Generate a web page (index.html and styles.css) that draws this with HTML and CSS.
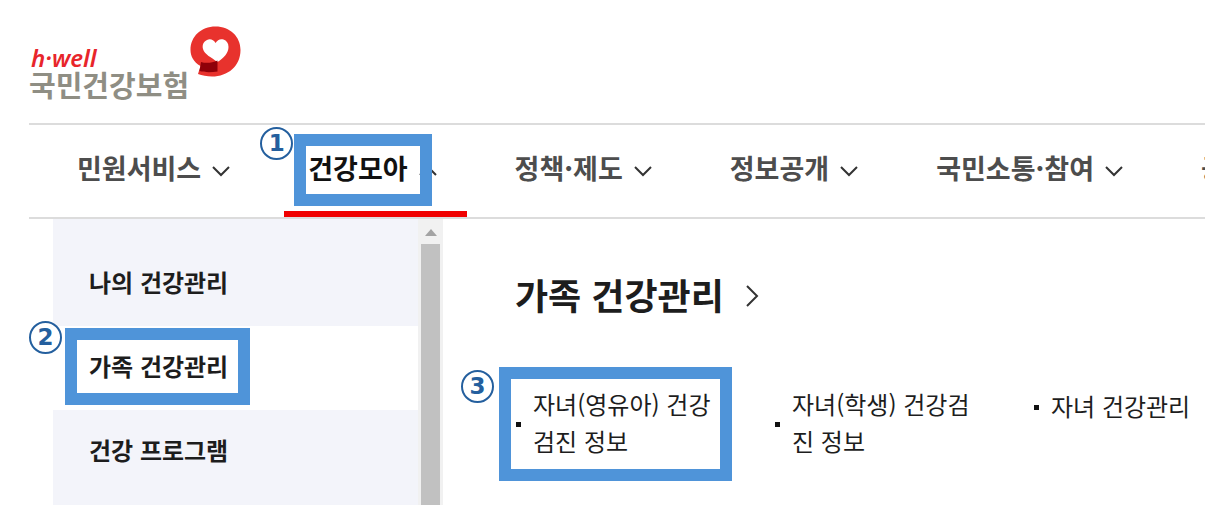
FILE: index.html
```html
<!DOCTYPE html>
<html lang="ko">
<head>
    <meta charset="UTF-8">
    <meta name="viewport" content="width=device-width, initial-scale=1.0">
    <title>국민건강보험</title>
    <link rel="stylesheet" href="styles.css">
</head>
<body>
    <header class="site-header">
        <a class="logo" href="#">
            <span class="logo-text">
                <span class="logo-en">h·well</span>
                <span class="logo-ko">국민건강보험</span>
            </span>
            <svg class="logo-mark" viewBox="0 0 51 51" aria-hidden="true">
                <path fill="#e8322d" d="M25.500 0.500C40 0.500 50.500 10.500 50.500 24C50.500 40 38 50.500 22 50.500C17 50.500 12 49.500 8 48L10.500 40C3.500 36 0.500 30 0.500 24C0.500 10.500 11 0.500 25.500 0.500Z"/>
                <path fill="#fff" d="M25.500 17C23.500 13.500 20 12.500 17 14C13.500 15.500 12 19 13 23C14.500 28.500 21.500 31.500 27.500 36C34 32 38.500 27 38.500 21C38.500 17 36.500 14.500 33.500 13.500C30.500 12.500 27.500 13.500 25.500 17Z"/>
                <path fill="#8f0009" d="M11 36C16 37.500 22 37 27.500 34.500V45.500C21 46.500 14.500 46.500 9.500 45Z"/>
            </svg>
        </a>
    </header>

    <nav class="main-nav">
        <a class="nav-item" href="#">민원서비스
            <svg class="arrow" viewBox="0 0 18 12"><path d="M1 2L9 10L17 2"/></svg>
        </a>
        <a class="nav-item active" href="#">건강모아
            <svg class="arrow" viewBox="0 0 18 12"><path d="M1 10L9 2L17 10"/></svg>
            <span class="frame frame-nav"></span>
            <span class="step step-nav">1</span>
        </a>
        <a class="nav-item" href="#">정책·제도
            <svg class="arrow" viewBox="0 0 18 12"><path d="M1 2L9 10L17 2"/></svg>
        </a>
        <a class="nav-item" href="#">정보공개
            <svg class="arrow" viewBox="0 0 18 12"><path d="M1 2L9 10L17 2"/></svg>
        </a>
        <a class="nav-item" href="#">국민소통·참여
            <svg class="arrow" viewBox="0 0 18 12"><path d="M1 2L9 10L17 2"/></svg>
        </a>
        <a class="nav-item" href="#">공단소개</a>
    </nav>

    <main class="mega-menu">
        <aside class="side-menu">
            <a class="side-item" href="#">나의 건강관리</a>
            <a class="side-item selected" href="#">가족 건강관리
                <span class="frame frame-side"></span>
                <span class="step step-side">2</span>
            </a>
            <a class="side-item" href="#">건강 프로그램</a>
        </aside>
        <div class="scrollbar" aria-hidden="true">
            <div class="scroll-up"></div>
            <div class="scroll-thumb"></div>
        </div>

        <section class="content">
            <h2 class="content-title">
                <a href="#">가족 건강관리
                    <svg class="title-arrow" viewBox="0 0 14 22"><path d="M2 1L12 11L2 21"/></svg>
                </a>
            </h2>
            <ul class="link-list">
                <li>
                    <a href="#">자녀(영유아) 건강검진 정보</a>
                    <span class="frame frame-link"></span>
                    <span class="step step-link">3</span>
                </li>
                <li><a href="#">자녀(학생) 건강검진 정보</a></li>
                <li><a href="#">자녀 건강관리</a></li>
            </ul>
        </section>
    </main>
</body>
</html>
```
FILE: styles.css
```css
* {
    box-sizing: border-box;
}

body {
    display: flex;
    flex-direction: column;
    min-height: 100vh;
    margin: 0;
    padding-left: 29px;
    background-color: #fff;
    color: #1d1d1d;
    font-family: "Noto Sans CJK KR", sans-serif;
    overflow: hidden;
}

a {
    color: inherit;
    text-decoration: none;
}

/* Header */
.site-header {
    display: flex;
    height: 123px;
    padding-top: 26px;
}

.logo {
    display: flex;
    align-items: flex-start;
    gap: 1px;
}

.logo-text {
    display: flex;
    flex-direction: column;
    padding-top: 21px;
}

.logo-en {
    padding-left: 2px;
    color: #e8252b;
    font-family: "Noto Sans", sans-serif;
    font-size: 24px;
    font-style: italic;
    font-weight: 600;
    line-height: 22px;
}

.logo-ko {
    color: #8f8e84;
    font-size: 29px;
    font-weight: 700;
    line-height: 30px;
}

.logo-mark {
    width: 51px;
    height: 51px;
}

/* Main navigation */
.main-nav {
    display: flex;
    gap: 24px;
    height: 96px;
    padding-left: 24px;
    border-top: 2px solid #dcdcdc;
    border-bottom: 2px solid #dcdcdc;
    overflow-x: clip;
}

.nav-item {
    position: relative;
    display: flex;
    flex-shrink: 0;
    align-items: center;
    gap: 11px;
    padding: 0 30px 8px 24px;
    color: #4d4d4d;
    font-size: 27px;
    font-weight: 700;
}

.nav-item.active {
    border-bottom: 6px solid #f00000;
    padding-bottom: 2px;
    color: #111;
}

.arrow {
    width: 18px;
    height: 12px;
    margin-top: 8px;
}

.arrow path,
.title-arrow path {
    fill: none;
    stroke: #333;
    stroke-width: 2;
}

/* Opened menu */
.mega-menu {
    display: flex;
    flex: 1;
    padding-left: 24px;
}

.side-menu {
    flex: 0 0 365px;
    padding-top: 23px;
    background-color: #f3f4fa;
}

.side-item {
    position: relative;
    display: flex;
    align-items: center;
    height: 84px;
    padding: 0 0 6px 36px;
    font-size: 24px;
    font-weight: 700;
}

.side-item.selected {
    background-color: #fff;
}

.scrollbar {
    display: flex;
    flex: 0 0 25px;
    flex-direction: column;
    align-items: center;
    background-color: #f1f1f1;
}

.scroll-up {
    margin: 10px 0 8px;
    border-right: 6px solid transparent;
    border-bottom: 7px solid #a3a3a3;
    border-left: 6px solid transparent;
}

.scroll-thumb {
    flex: 1;
    width: 19px;
    background-color: #c1c1c1;
}

.content {
    flex: 1;
    padding: 48px 0 0 72px;
}

.content-title {
    margin: 0 0 64px;
    font-size: 36px;
    font-weight: 700;
    line-height: 54px;
}

.content-title a {
    display: flex;
    align-items: center;
    gap: 21px;
}

.title-arrow {
    width: 14px;
    height: 22px;
    margin-top: 4px;
}

.link-list {
    display: grid;
    grid-template-columns: 200px 200px 1fr;
    gap: 59px;
    margin: 0;
    padding: 0;
    list-style: none;
}

.link-list li {
    position: relative;
    display: flex;
    align-items: center;
    align-self: start;
    gap: 12px;
    min-height: 41px;
    padding-left: 1px;
    font-size: 24px;
    line-height: 37px;
}

.link-list li::before {
    content: "";
    flex: 0 0 5px;
    height: 5px;
    margin-top: 4px;
    background-color: #111;
}

/* Numbered highlights over the menu */
.frame {
    position: absolute;
    border: 12px solid #4f94d9;
}

.frame-nav {
    top: 9px;
    left: 10px;
    width: 138px;
    height: 72px;
}

.frame-side {
    top: 2px;
    left: 12px;
    width: 185px;
    height: 77px;
}

.frame-link {
    top: -18px;
    left: -16px;
    width: 233px;
    height: 114px;
}

.step {
    position: absolute;
    width: 33px;
    height: 33px;
    border: 2px solid #245f9e;
    border-radius: 50%;
    color: #245f9e;
    font-family: "DejaVu Sans", sans-serif;
    font-size: 23px;
    font-weight: 700;
    line-height: 29px;
    text-align: center;
}

.step-nav {
    top: 2px;
    left: -24px;
}

.step-side {
    top: -5px;
    left: -24px;
}

.step-link {
    top: -15px;
    left: -54px;
}
```
